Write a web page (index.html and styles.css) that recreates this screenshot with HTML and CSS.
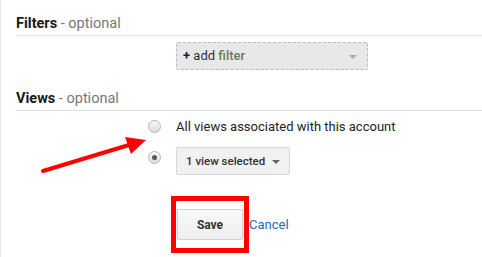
FILE: index.html
```html
<!DOCTYPE html>
<html>
<head>
<meta charset="utf-8">
<link rel="stylesheet" href="styles.css">
</head>
<body>
<div class="page">
  <section class="section filters">
    <h2 class="heading"><b>Filters</b> <span class="opt">- optional</span></h2>
    <div class="row">
      <div class="filter-select"><span class="plus">+</span>&nbsp;add <span class="fw">filter</span><span class="caret light"></span></div>
    </div>
  </section>
  <section class="section views">
    <h2 class="heading"><b>Views</b> <span class="opt">- optional</span></h2>
    <div class="radio-row r1">
      <span class="radio"></span>
      <span class="label">All views associated with this account</span>
    </div>
    <div class="radio-row r2">
      <span class="radio checked"></span>
      <div class="view-btn">1 view selected<span class="caret"></span></div>
    </div>
    <div class="actions">
      <div class="save-box"><button class="save">Save</button></div>
      <a class="cancel">Cancel</a>
    </div>
  </section>
  <svg class="arrow" width="482" height="257" viewBox="0 0 482 257">
    <line x1="42" y1="171" x2="128" y2="145" stroke="#f00" stroke-width="4" stroke-linecap="round"/>
    <polygon points="145,140 124,137 130,154" fill="#f00"/>
  </svg>
</div>
</body>
</html>
```

FILE: styles.css
```css
html, body { margin: 0; padding: 0; background: #fff; }
body { font-family: Roboto, "Liberation Sans", Arial, sans-serif; color: #222; width: 482px; height: 257px; overflow: hidden; }
.page { position: relative; height: 257px; border-left: 1px solid #e6e6e6; box-sizing: border-box; padding-left: 15px; }
.heading { margin: 0; font-size: 14.5px; font-weight: normal; line-height: 17px; padding-bottom: 3px; border-bottom: 1px solid #e0e0e0; color: #222; }
.heading b { font-weight: bold; color: #1a1a1a; }
.opt { color: #777; }
.filters { padding-top: 15px; }
.row { padding-left: 160px; padding-top: 6px; }
.filter-select { position: relative; box-sizing: border-box; width: 192px; height: 28px; border: 1px dashed #bbb; background: #e8e8e8; border-radius: 2px; font-size: 13px; line-height: 26px; padding-left: 6px; color: #333; }
.plus { font-weight: bold; color: #222; }
.fw { font-weight: 500; color: #6e7a5a; }
.caret { position: absolute; right: 10px; top: 12px; width: 0; height: 0; border-left: 4px solid transparent; border-right: 4px solid transparent; border-top: 4px solid #666; }
.caret.light { border-top-color: #aaa; }
.views { padding-top: 20px; }
.radio-row { display: flex; padding-left: 132px; }
.r1 { margin-top: 8px; height: 14px; align-items: center; }
.r2 { margin-top: 14px; align-items: flex-start; }
.r2 .radio { margin-top: 4px; }
.radio { width: 11px; height: 11px; border: 1px solid #b5b5b5; border-radius: 50%; background: linear-gradient(#fafafa, #dcdcdc); margin-right: 15px; position: relative; flex: none; }
.radio.checked::after { content: ""; position: absolute; left: 3px; top: 3px; width: 5px; height: 5px; border-radius: 50%; background: #555; }
.label { font-size: 13px; color: #222; }
.view-btn { position: relative; width: 114px; height: 28px; box-sizing: border-box; border: 1px solid #d6d6d6; background: #f1f1f1; border-radius: 2px; font-size: 11.5px; font-weight: 500; line-height: 26px; padding-left: 9px; color: #333; }
.view-btn .caret { right: 9px; top: 12px; }
.actions { display: flex; align-items: center; padding-left: 155px; margin-top: 21px; }
.save-box { border: 5px solid #f00; padding: 8px 1px; box-sizing: border-box; width: 78px; height: 57px; }
.save { width: 66px; height: 31px; border: 1px solid #d0d0d0; border-radius: 2px; background: linear-gradient(#f9f9f9, #eee); font-family: inherit; font-size: 12px; font-weight: bold; color: #333; padding: 0; margin: 0; }
.cancel { font-size: 13px; color: #1a6bb8; margin-left: 0; }
.arrow { position: absolute; left: 0; top: 0; pointer-events: none; }
```
